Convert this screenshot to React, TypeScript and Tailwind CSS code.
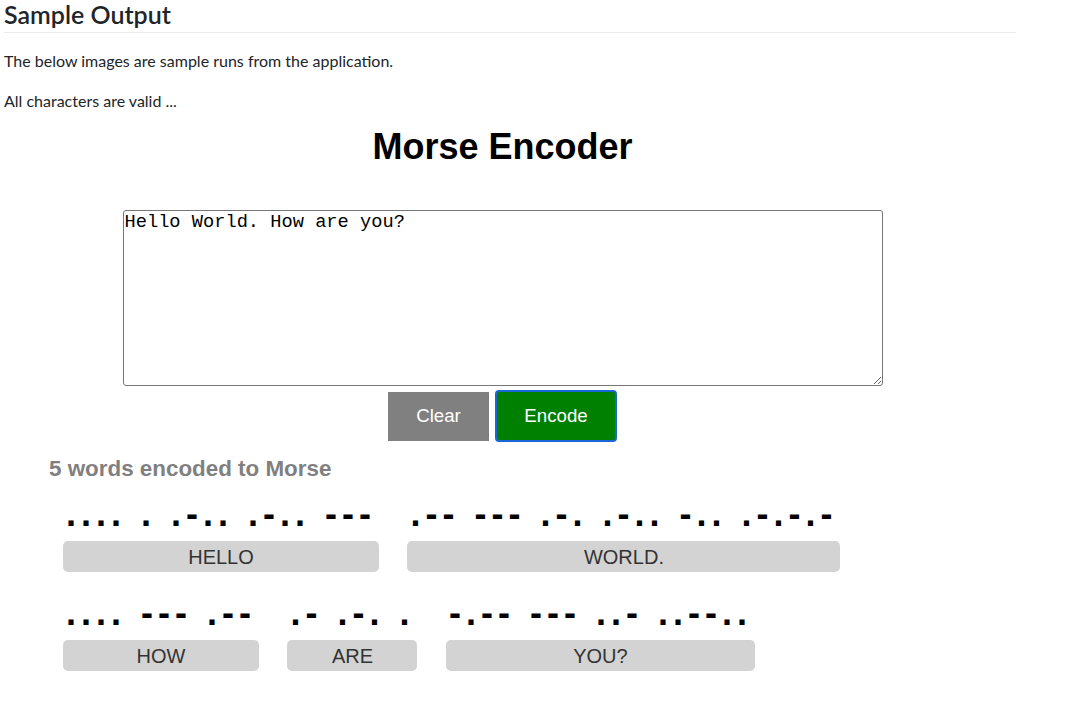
import React from "react";

const MORSE: Record<string, string> = {
  A: ".-", B: "-...", C: "-.-.", D: "-..", E: ".", F: "..-.", G: "--.", H: "....",
  I: "..", J: ".---", K: "-.-", L: ".-..", M: "--", N: "-.", O: "---", P: ".--.",
  Q: "--.-", R: ".-.", S: "...", T: "-", U: "..-", V: "...-", W: ".--", X: "-..-",
  Y: "-.--", Z: "--..", ".": ".-.-.-", "?": "..--..", ",": "--..--",
};

const encode = (w: string) =>
  w
    .split("")
    .map((c) => MORSE[c] ?? "")
    .join(" ");

const words = ["HELLO", "WORLD.", "HOW", "ARE", "YOU?"];

function Word({ word }: { word: string }) {
  return (
    <div className="flex flex-col">
      <div className="px-[3px] h-[36px] leading-[36px] text-[36px] font-bold tracking-[5px] whitespace-pre text-black [font-family:'Liberation_Sans',Arial,sans-serif]">
        {encode(word)}
      </div>
      <div className="mt-[9px] h-[31px] rounded-[5px] bg-[#d3d3d3] flex items-center justify-center text-[20px] text-[#333333] [font-family:'Liberation_Sans',Arial,sans-serif]">
        {word}
      </div>
    </div>
  );
}

export default function App() {
  return (
    <div className="w-[1073px] h-[714px] bg-white overflow-hidden">
      <div className="ml-[4px] w-[1012px] text-[#212529] [font-family:Lato,'Noto_Sans',sans-serif]">
        <h2 className="pt-[1px] pb-[5px] border-b border-[#eaecef] text-[25px] leading-[26px] font-semibold">
          Sample Output
        </h2>
        <p className="mt-[16px] text-[16px] leading-[24px]">
          The below images are sample runs from the application.
        </p>
        <p className="mt-[16px] text-[16px] leading-[24px]">All characters are valid ...</p>
      </div>
      <div className="w-[1005px] [font-family:'Liberation_Sans',Arial,sans-serif]">
        <h1 className="mt-[16px] text-center text-[36px] leading-[36px] font-bold text-black">
          Morse Encoder
        </h1>
        <div className="mt-[45px] flex justify-center">
          <textarea
            defaultValue="Hello World. How are you?"
            className="w-[760px] h-[176px] border border-[#767676] rounded-[3px] pt-[2px] px-[1px] pb-[2px] leading-[19px] text-[18.7px] text-black bg-white resize-y outline-none [font-family:'Liberation_Mono','Courier_New',monospace]"
          />
        </div>
        <div className="mt-[4px] h-[52px] flex items-center justify-center gap-[6px]">
          <button className="w-[101px] h-[49px] bg-[#808080] text-white text-[18.7px]">
            Clear
          </button>
          <button className="w-[122px] h-[52px] bg-[#008000] text-white text-[18.7px] border-2 border-[#1a66d9] rounded-[4px]">
            Encode
          </button>
        </div>
        <div className="mt-[14px] ml-[49px] text-[22.4px] leading-[26px] font-bold text-[#808080]">
          5 words encoded to Morse
        </div>
        <div className="mt-[14px] ml-[63px] w-[900px] flex flex-wrap gap-x-[28.5px] gap-y-[23px]">
          {words.map((w) => (
            <Word key={w} word={w} />
          ))}
        </div>
      </div>
    </div>
  );
}
